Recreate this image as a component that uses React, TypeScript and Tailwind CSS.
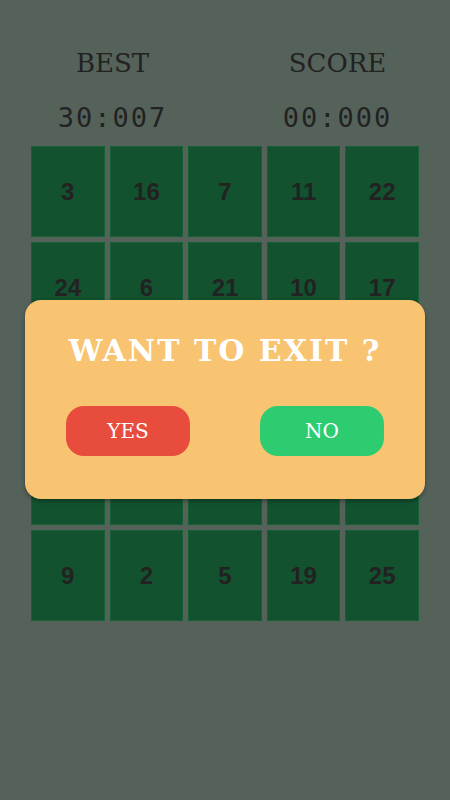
const tiles = [3, 16, 7, 11, 22, 24, 6, 21, 10, 17, 14, 1, 23, 8, 12, 20, 4, 13, 18, 15, 9, 2, 5, 19, 25]

const serif = "font-['DejaVu_Serif','Liberation_Serif',serif]"

function Stat({ label, value }: { label: string; value: string }) {
  return (
    <div className="flex flex-col items-center">
      <div className={`${serif} text-[26px] leading-none text-[#222]`}>{label}</div>
      <div className="mt-[28px] font-['DejaVu_Sans_Mono',monospace] text-[27px] leading-none tracking-[2px] text-[#222]">
        {value}
      </div>
    </div>
  )
}

export default function App() {
  return (
    <div className="relative h-[800px] w-[450px] overflow-hidden bg-[#55625a]">
      <div className="grid grid-cols-2 pt-[50px]">
        <Stat label="BEST" value="30:007" />
        <Stat label="SCORE" value="00:000" />
      </div>

      <div className="mx-[31px] mt-[15px] grid w-[388px] grid-cols-5 gap-[5px]">
        {tiles.map((n) => (
          <div
            key={n}
            className="flex h-[91px] items-center justify-center border border-[#166035] bg-[#12522f] font-['Liberation_Sans',sans-serif] text-[24px] font-bold text-[#222]"
          >
            {n}
          </div>
        ))}
      </div>

      {/* exit dialog */}
      <div className="absolute left-[25px] top-[300px] flex h-[199px] w-[400px] flex-col items-center rounded-[16px] bg-[#f8c471] shadow-[0_2px_4px_rgba(0,0,0,0.35)]">
        <div className={`mt-[36px] ${serif} text-[30px] font-bold leading-none tracking-[2px] text-white`}>
          WANT TO EXIT ?
        </div>
        <div className="mt-[40px] flex w-full justify-between px-[41px]">
          <button className={`flex h-[50px] w-[124px] items-center justify-center rounded-[18px] bg-[#e74c3c] ${serif} text-[20px] text-white`}>
            YES
          </button>
          <button className={`flex h-[50px] w-[124px] items-center justify-center rounded-[18px] bg-[#2ecc71] ${serif} text-[20px] text-white`}>
            NO
          </button>
        </div>
      </div>
    </div>
  )
}
